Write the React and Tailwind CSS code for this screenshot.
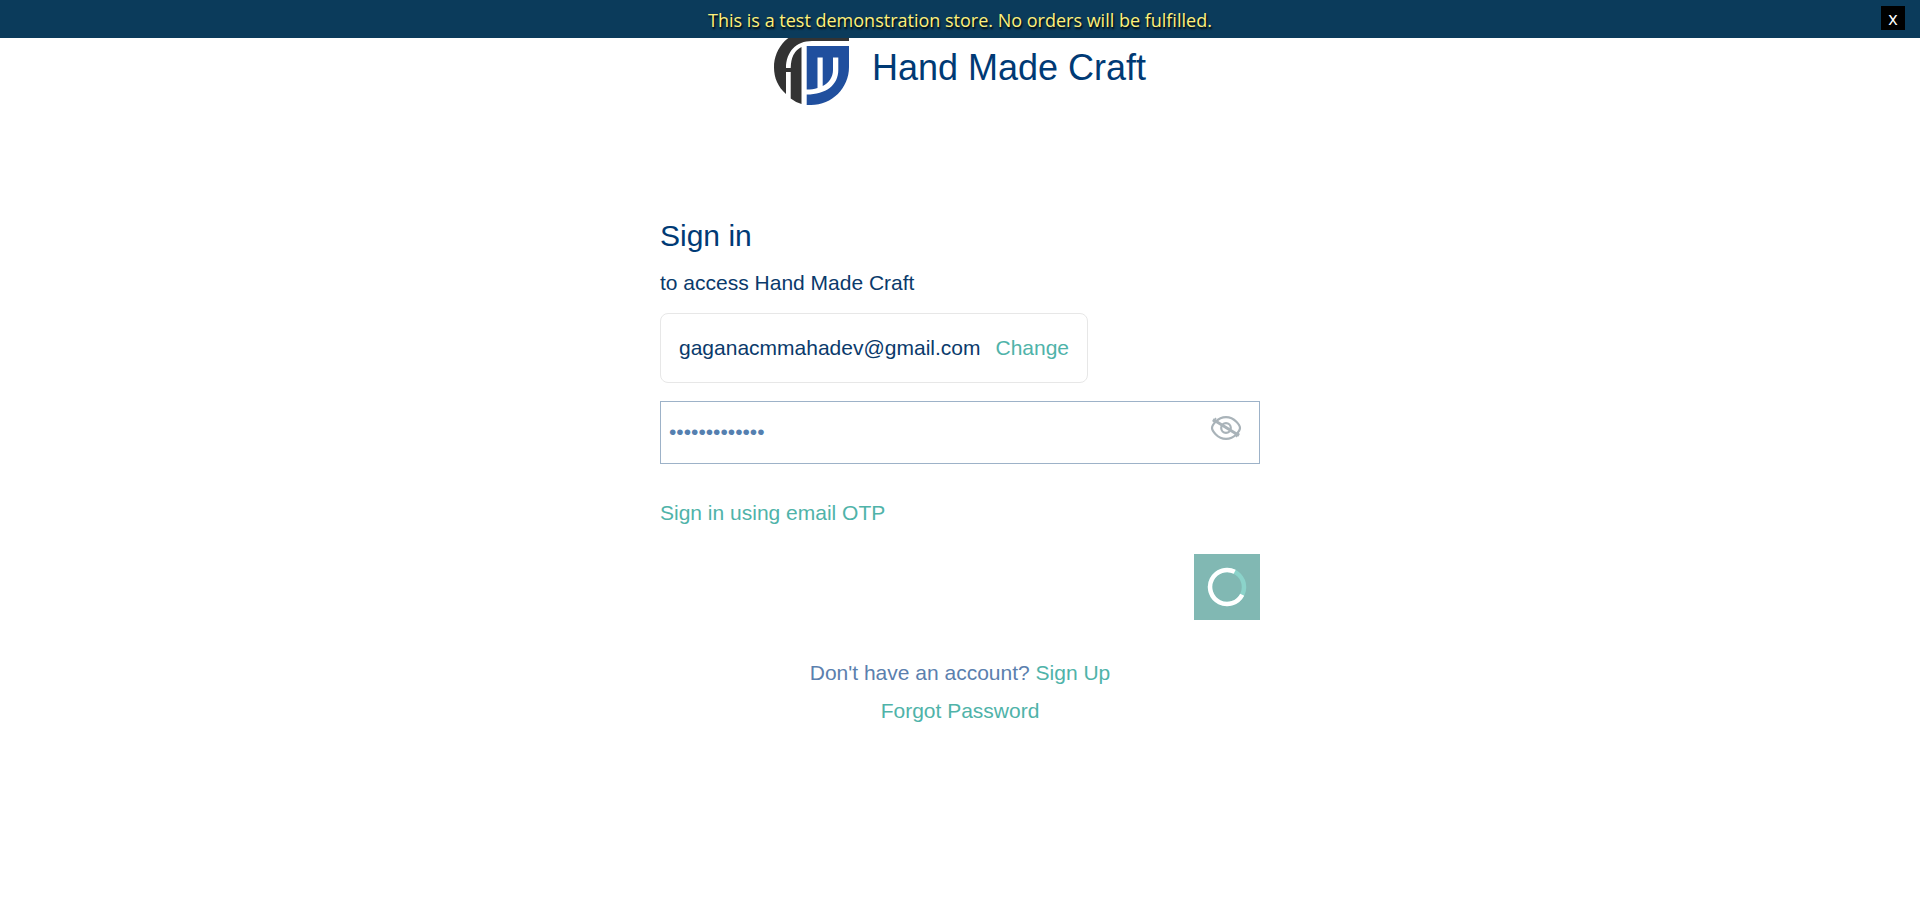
import { useState } from "react";

function Logo() {
  return (
    <svg className="h-[75px] w-[75px] shrink-0" viewBox="0 0 75 75" role="img" aria-label="Hand Made Craft logo">
      <path
        fill="#333333"
        d="M75 11V0H38C16 0 0 17 0 37.500C0 48 4 57 12 64V42H16.700V68.500Q21 72 27.500 74V17Q17 22 16.700 38H12C12 22 22 11 38 11Z"
      />
      <path
        fill="#204f9e"
        d="M32.700 16H75V37C75 58 58 75 37 75H32.700V64.500C52 64.500 64.300 55 64.300 40V27.500H59V40C59 47 55 53 48.700 56V27.500H43.500V58C40 59.200 37 59.500 32.700 59.500Z"
      />
    </svg>
  );
}

export default function App() {
  const [bannerOpen, setBannerOpen] = useState(true);
  const [password, setPassword] = useState("craftsandmade");
  const [visible, setVisible] = useState(false);

  return (
    <div className="min-h-screen bg-white font-['Liberation_Sans',Arial,sans-serif] text-[21px] leading-[38px] text-[#0a3a6b]">
      {bannerOpen && (
        <div className="fixed inset-x-0 top-0 z-10 flex h-[38px] items-center justify-center bg-[#0b3b5b] px-10 font-['Open_Sans','Noto_Sans',sans-serif]">
          <p className="pt-0.5 text-lg leading-6 text-[#fff07a] [text-shadow:1px_2px_2px_#000]">
            This is a test demonstration store. No orders will be fulfilled.
          </p>
          <button
            type="button"
            aria-label="Close notice"
            onClick={() => setBannerOpen(false)}
            className="absolute top-1.5 right-[15px] h-6 w-6 bg-black text-lg leading-6 text-white"
          >
            x
          </button>
        </div>
      )}
      <header className="flex items-center justify-center gap-[23px] pt-[30px]">
        <Logo />
        <span className="text-4xl text-[#003a75]">Hand Made Craft</span>
      </header>
      <main className="mx-auto mt-[107px] w-full max-w-[600px]">
        <h1 className="text-3xl leading-[48px] text-[#003a75]">Sign in</h1>
        <p className="mt-1">to access Hand Made Craft</p>
        <div className="mt-[11px] flex h-[70px] w-fit items-center gap-[15px] rounded-lg border border-[#e7e7e7] px-[18px]">
          <span>gaganacmmahadev@gmail.com</span>
          <a href="#change" className="text-[#4fb3a9]">Change</a>
        </div>
        <form onSubmit={(e) => e.preventDefault()}>
          <div className="mt-[18px] flex h-[63px] items-center border border-[#9db2c8] pr-[17px] pl-2">
            <input
              type={visible ? "text" : "password"}
              aria-label="Password"
              value={password}
              onChange={(e) => setPassword(e.target.value)}
              className="min-w-0 flex-1 pb-0.5 text-[#5580b0] outline-none"
            />
            <button type="button" aria-label="Show password" onClick={() => setVisible(!visible)} className="pb-2.5">
              <svg className="h-6 w-8" viewBox="0 0 32 24" fill="none" stroke="#a9b3b9" strokeWidth="2.200">
                <path d="M2 12C2 10 7 1.200 16 1.200S30 10 30 12S25 22.800 16 22.800S2 14 2 12Z" />
                <circle cx="16" cy="12" r="4.800" />
                <path strokeWidth="3" d="M3 3.500 29 19.500" />
                <path strokeWidth="1.500" d="M3 6 6 2M26 21 29 17" />
              </svg>
            </button>
          </div>
          <a href="#otp" className="mt-[30px] block w-fit text-[#4fb3a9]">Sign in using email OTP</a>
          <button type="submit" aria-label="Signing in" className="mt-[22px] ml-auto flex h-[66px] w-[66px] items-center justify-center bg-[#81b8b3]">
            <svg className="h-10 w-10" viewBox="0 0 40 40" fill="none" strokeWidth="4.500">
              <circle cx="20" cy="20" r="17" stroke="#8bd3ca" />
              <path stroke="#ffffff" d="M27.700 4.800A17 17 0 1 0 35.200 27.700" />
            </svg>
          </button>
        </form>
        <div className="mt-[34px] text-center text-[#5b80ae]">
          <p>Don't have an account? <a href="#signup" className="text-[#4fb3a9]">Sign Up</a></p>
          <p><a href="#forgot" className="text-[#4fb3a9]">Forgot Password</a></p>
        </div>
      </main>
    </div>
  );
}
